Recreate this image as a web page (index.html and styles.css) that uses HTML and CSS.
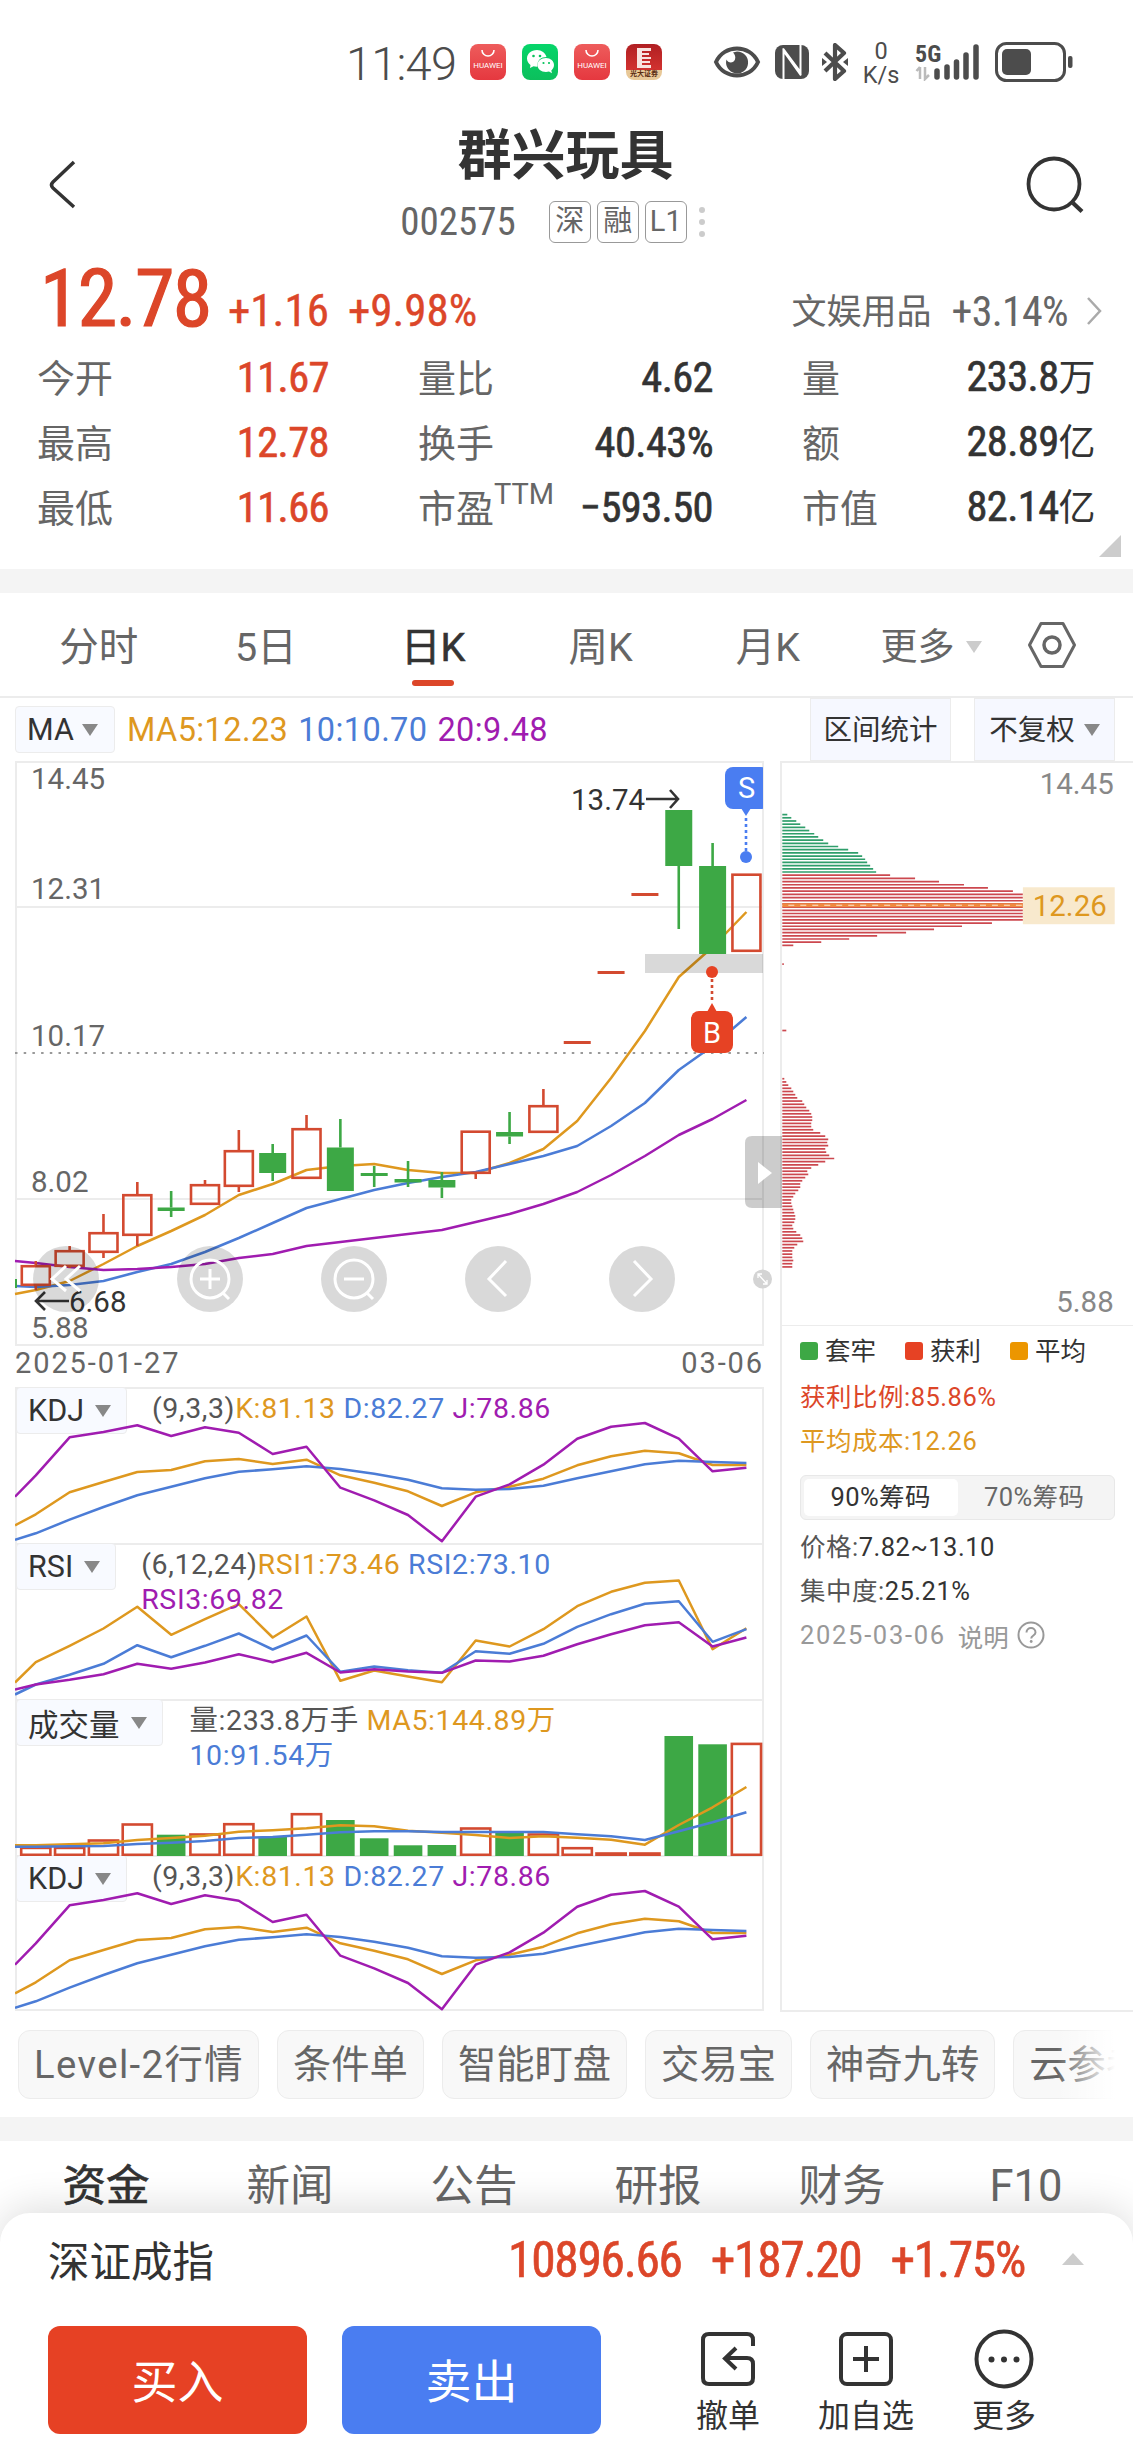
FILE: index.html
```html
<!DOCTYPE html>
<html lang="zh-CN">

<head>
    <meta charset="UTF-8" />
    <meta name="viewport" content="width=device-width, initial-scale=1.0" />
    <title>群兴玩具 002575</title>
    <link rel="stylesheet" href="styles.css">
</head>

<body>
    <div class="status-bar">
        <span class="time">11:49</span>
        <div class="app-icons">
            <div class="app huawei">
                <svg width="16" height="9" viewBox="0 0 16 9"><path d="M2 1a6 6 0 0 0 12 0" fill="none" stroke="#fff" stroke-width="1.6" /></svg>
                <span>HUAWEI</span>
            </div>
            <div class="app wechat">
                <svg width="28" height="26" viewBox="0 0 28 26">
                    <path d="M11 1C5 1 1 5 1 9.500c0 3 1.500 5 3.500 6.500L4 19l3.500-1.800c1 .3 2.500.5 4 .4C11 11 15 8 20.500 8 19.500 4 15.500 1 11 1z" fill="#fff" />
                    <path d="M20 9c-5 0-8.500 3-8.500 7s3.500 7 8.500 7c1 0 2-.2 3-.5l3 1.700-.7-2.800c1.700-1.300 2.700-3.200 2.700-5.400 0-4-3.500-7-8-7z" fill="#fff" />
                    <g fill="#07c35c"><circle cx="7.500" cy="7" r="1.300" /><circle cx="14" cy="7" r="1.300" /><circle cx="17.500" cy="14" r="1.100" /><circle cx="23" cy="14" r="1.100" /></g>
                </svg>
            </div>
            <div class="app huawei">
                <svg width="16" height="9" viewBox="0 0 16 9"><path d="M2 1a6 6 0 0 0 12 0" fill="none" stroke="#fff" stroke-width="1.6" /></svg>
                <span>HUAWEI</span>
            </div>
            <div class="app broker">
                <svg width="16" height="21" viewBox="0 0 16 21"><path d="M1 0h14v3H6v2h7v2H6v2h9v2H6v2h8v2H6v2h9v3H1z" fill="#f8e3e0" /></svg>
                <span>光大证券</span>
            </div>
        </div>
        <div class="status-icons">
            <svg width="48" height="34" viewBox="0 0 48 34">
                <path d="M3 17C11 -1 37 -1 45 17C37 35 11 35 3 17z" fill="none" stroke="#4c4c4c" stroke-width="4" />
                <path d="M24 6.500a11 11 0 1 1-10.500 8c1.500 4 7 4 8.500 0 1-3-.5-5.500-2-7z" fill="#4c4c4c" />
            </svg>
            <svg class="nfc" width="34" height="34" viewBox="0 0 34 34">
                <rect x="0" y="0" width="34" height="34" rx="8" fill="#4c4c4c" />
                <path d="M8.500 34V6L26 30.500M25.500 0v27L8 3.500" fill="none" stroke="#fff" stroke-width="2" />
            </svg>
            <svg class="bt" width="26" height="38" viewBox="0 0 26 38">
                <path d="M3 10l19 18-9 8V2l9 8L3 28" fill="none" stroke="#4c4c4c" stroke-width="4.200" stroke-linejoin="round" />
                <path d="M0 15l5 4-5 4zM26 15l-5 4 5 4z" fill="#4c4c4c" />
            </svg>
            <div class="speed"><span>0</span><span>K/s</span></div>
            <div class="signal">
                <span>5G</span>
                <svg width="66" height="38" viewBox="0 0 66 38">
                    <path d="M5 24v12M1.500 28l3.500-4M10 24v12l4-4" fill="none" stroke="#bbb" stroke-width="2.500" />
                    <g stroke="#4c4c4c" stroke-width="5.500" stroke-linecap="round"><path d="M22 28v6M32 24v10M41.500 19v15M51 12v22M61 4v30" /></g>
                </svg>
            </div>
            <svg class="battery" width="78" height="40" viewBox="0 0 78 40">
                <rect x="1.500" y="1.500" width="68" height="37" rx="10" fill="none" stroke="#4c4c4c" stroke-width="3" />
                <rect x="7" y="7" width="29" height="26" rx="5" fill="#4c4c4c" />
                <rect x="73" y="14" width="4.500" height="12" rx="2" fill="#4c4c4c" />
            </svg>
        </div>
    </div>

    <header class="top">
        <svg class="back" width="28" height="50" viewBox="0 0 28 50"><path d="M26 2L5 22q-3 3 0 6L26 47" fill="none" stroke="#333" stroke-width="3.500" /></svg>
        <div class="title">
            <h1>群兴玩具</h1>
            <div class="code-row">
                <span class="code">002575</span>
                <span class="mark">深</span>
                <span class="mark">融</span>
                <span class="mark">L1</span>
                <span class="dots"><i></i><i></i><i></i></span>
            </div>
        </div>
        <svg class="search" width="60" height="60" viewBox="0 0 60 60"><circle cx="29" cy="29" r="25.500" fill="none" stroke="#333" stroke-width="3.800" /><path d="M48 48l9 8.500" stroke="#333" stroke-width="4.200" /></svg>
    </header>

    <section class="quote">
        <div class="price-row">
            <span class="price">12.78</span>
            <span class="change">+1.16</span>
            <span class="change percent">+9.98%</span>
            <span class="sector">文娱用品</span>
            <span class="sector-change">+3.14%</span>
            <svg width="16" height="30" viewBox="0 0 16 30"><path d="M2 2l12 13L2 28" fill="none" stroke="#aaa" stroke-width="2.500" /></svg>
        </div>
        <div class="stats">
            <div><label>今开</label><b class="red">11.67</b></div>
            <div><label>量比</label><b>4.62</b></div>
            <div><label>量</label><b>233.8<em>万</em></b></div>
            <div><label>最高</label><b class="red">12.78</b></div>
            <div><label>换手</label><b>40.43%</b></div>
            <div><label>额</label><b>28.89<em>亿</em></b></div>
            <div><label>最低</label><b class="red">11.66</b></div>
            <div><label>市盈<sup>TTM</sup></label><b>−593.50</b></div>
            <div><label>市值</label><b>82.14<em>亿</em></b></div>
        </div>
        <i class="corner"></i>
    </section>

    <nav class="period">
        <span>分时</span>
        <span>5日</span>
        <span class="active">日K</span>
        <span>周K</span>
        <span>月K</span>
        <span class="more">更多<i class="down light"></i></span>
        <svg width="50" height="48" viewBox="0 0 50 48"><path d="M14 2.500h22L47.500 24 36 45.500H14L2.500 24z" fill="none" stroke="#666" stroke-width="3" stroke-linejoin="round" /><circle cx="25" cy="24" r="8" fill="none" stroke="#666" stroke-width="3.500" /></svg>
    </nav>

    <div class="ma-row">
        <span class="pick">MA<i class="down"></i></span>
        <span class="values"><span class="c1">MA5:12.23</span> <span class="c2">10:10.70</span> <span class="c3">20:9.48</span></span>
        <span class="tool">区间统计</span>
        <span class="tool">不复权<i class="down"></i></span>
    </div>

    <main class="charts">
        <div class="left">
            <svg id="kline" width="749" height="585" viewBox="0 0 749 585"></svg>
            <div class="dates"><span>2025-01-27</span><span>03-06</span></div>
            <div class="panel">
                <svg class="lines" data-chart="kdj" width="748" height="155"></svg>
                <span class="pick">KDJ<i class="down"></i></span>
                <p class="kdj"><span>(9,3,3)</span><span class="c1">K:81.13</span> <span class="c2">D:82.27</span> <span class="c3">J:78.86</span></p>
            </div>
            <div class="panel">
                <svg class="lines" data-chart="rsi" width="748" height="155"></svg>
                <span class="pick">RSI<i class="down"></i></span>
                <p class="rsi"><span>(6,12,24)</span><span class="c1">RSI1:73.46</span> <span class="c2">RSI2:73.10</span><br><span class="c3">RSI3:69.82</span></p>
            </div>
            <div class="panel">
                <svg class="lines" data-chart="vol" width="748" height="156"></svg>
                <span class="pick">成交量<i class="down"></i></span>
                <p class="vol"><span>量:233.8万手</span> <span class="c1">MA5:144.89万</span><br><span class="c2">10:91.54万</span></p>
            </div>
            <div class="panel">
                <svg class="lines" data-chart="kdj" width="748" height="155"></svg>
                <span class="pick">KDJ<i class="down"></i></span>
                <p class="kdj"><span>(9,3,3)</span><span class="c1">K:81.13</span> <span class="c2">D:82.27</span> <span class="c3">J:78.86</span></p>
            </div>
        </div>

        <div class="right">
            <svg id="chips" width="351" height="563" viewBox="0 0 351 563"></svg>
            <div class="chip-info">
                <div class="legend"><span class="lg">套牢</span><span class="lr">获利</span><span class="lo">平均</span></div>
                <p class="red">获利比例:85.86%</p>
                <p class="c1">平均成本:12.26</p>
                <div class="segment"><span class="on">90%筹码</span><span>70%筹码</span></div>
                <p><span>价格:</span>7.82~13.10</p>
                <p><span>集中度:</span>25.21%</p>
                <div class="note"><span class="day">2025-03-06</span><span>说明</span>
                    <svg width="28" height="28" viewBox="0 0 28 28"><circle cx="14" cy="14" r="12.500" fill="none" stroke="#999" stroke-width="2" /><path d="M9.500 11.500c0-6 9-6 9 0 0 3-4.300 3-4.300 6" fill="none" stroke="#999" stroke-width="2" /><circle cx="14.200" cy="20.500" r="1.400" fill="#999" /></svg>
                </div>
            </div>
        </div>
    </main>

    <div class="shortcuts">
        <span class="latin">Level-2行情</span>
        <span>条件单</span>
        <span>智能盯盘</span>
        <span>交易宝</span>
        <span>神奇九转</span>
        <span>云参考</span>
    </div>

    <nav class="info-tabs">
        <span class="active">资金</span>
        <span>新闻</span>
        <span>公告</span>
        <span>研报</span>
        <span>财务</span>
        <span>F10</span>
    </nav>

    <footer class="sheet">
        <div class="index-row">
            <span class="name">深证成指</span>
            <span class="num">10896.66</span>
            <span class="num">+187.20</span>
            <span class="num">+1.75%</span>
            <i class="up"></i>
        </div>
        <div class="actions">
            <button class="buy">买入</button>
            <button class="sell">卖出</button>
            <div class="act">
                <svg width="60" height="60" viewBox="0 0 60 60"><path d="M55 17V11q0-6-6-6H11q-6 0-6 6v38q0 6 6 6h38q6 0 6-6V35q0-6-6-6H27M38 19L27 29.500 38 40" fill="none" stroke="#333" stroke-width="4" /></svg>
                <span>撤单</span>
            </div>
            <div class="act">
                <svg width="60" height="60" viewBox="0 0 60 60"><rect x="5" y="5" width="50" height="50" rx="6" fill="none" stroke="#333" stroke-width="4" /><path d="M30 17v26M17 30h26" stroke="#333" stroke-width="4" /></svg>
                <span>加自选</span>
            </div>
            <div class="act">
                <svg width="60" height="60" viewBox="0 0 60 60"><circle cx="30" cy="30" r="27.500" fill="none" stroke="#333" stroke-width="4" /><g fill="#333"><circle cx="17.500" cy="30.500" r="3" /><circle cx="30" cy="30.500" r="3" /><circle cx="42.500" cy="30.500" r="3" /></g></svg>
                <span>更多</span>
            </div>
        </div>
    </footer>

    <script src="script.js"></script>
</body>

</html>
```
FILE: styles.css
```css
:root {
    --red: #dc4629;
    --green: #3da845;
    --orange: #de981f;
    --blue: #4b7cd6;
    --purple: #a01cb0;
    --text: #333;
    --gray: #666;
    --line: #ececec;
    --num: "Roboto Condensed", Roboto, "Noto Sans CJK SC", sans-serif;
}

* {
    box-sizing: border-box;
}

body {
    margin: 0;
    width: 1133px;
    height: 2453px;
    overflow: hidden;
    background: #fff;
    color: var(--text);
    font-family: Roboto, "Noto Sans CJK SC", sans-serif;
    white-space: nowrap;
}

svg {
    display: block;
    flex: none;
}

h1,
p {
    margin: 0;
}

i,
em {
    font-style: normal;
}

.red {
    color: var(--red);
}

.c1 {
    color: var(--orange);
}

.c2 {
    color: var(--blue);
}

.c3 {
    color: var(--purple);
}

.down {
    display: inline-block;
    border: 8.5px solid transparent;
    border-top: 12px solid #888;
    border-bottom: 0;
}

.down.light {
    border-top-color: #ccc;
}

/* status bar */
.status-bar {
    display: flex;
    align-items: center;
    height: 126px;
    padding-left: 346px;
    color: #4c4c4c;
}

.time {
    width: 124px;
    font-size: 47px;
    letter-spacing: -.8px;
    font-weight: 350;
}

.app-icons {
    display: flex;
    gap: 16px;
}

.app {
    display: flex;
    flex-direction: column;
    align-items: center;
    width: 36px;
    height: 36px;
    border-radius: 8px;
    overflow: hidden;
}

.huawei {
    padding-top: 5px;
    background: linear-gradient(#ee5c5c, #e5383f);
}

.huawei span {
    margin-top: 2px;
    color: #fff;
    font-size: 8px;
    line-height: 12px;
}

.wechat {
    justify-content: center;
    background: linear-gradient(#06d56a, #0cbf5c);
}

.broker {
    padding-top: 4px;
    background: linear-gradient(#b01f22, #d23230 72%, #e8c898 73%);
}

.broker span {
    font-size: 7px;
    line-height: 10px;
    font-weight: bold;
    color: #5a2a10;
}

.status-icons {
    display: flex;
    align-items: center;
    margin-left: 51px;
}

.nfc {
    margin-left: 14px;
}

.bt {
    margin-left: 13px;
}

.speed {
    display: flex;
    flex-direction: column;
    align-items: center;
    width: 40px;
    margin-left: 13px;
    font-size: 23.5px;
    line-height: 24px;
}

.signal {
    position: relative;
    margin-left: 14px;
}

.signal span {
    position: absolute;
    left: 0;
    top: -2px;
    font: bold 24px/24px var(--num);
}

.battery {
    margin-left: 14px;
}

.status-bar .status-icons svg,
.app-icons {
    position: relative;
    top: -1px;
}

/* header */
.top {
    display: flex;
    align-items: center;
    justify-content: space-between;
    height: 130px;
    padding: 0 48px 12px;
}

.title {
    display: flex;
    flex-direction: column;
    align-items: center;
    padding-left: 30px;
}

h1 {
    font-size: 54px;
    line-height: 60px;
    font-weight: bold;
}

.code-row {
    display: flex;
    align-items: center;
    margin: 14px 0 0 -26px;
    color: var(--gray);
}

.code {
    font: 39px/42px var(--num);
    margin-right: 33px;
}

.mark {
    width: 42px;
    height: 42px;
    margin-right: 6px;
    border: 1.5px solid #999;
    border-radius: 6px;
    text-align: center;
    font-size: 29px;
    line-height: 38px;
}

.dots {
    display: flex;
    flex-direction: column;
    gap: 6px;
    margin-left: 6px;
}

.dots i {
    width: 6px;
    height: 6px;
    border-radius: 3px;
    background: #ccc;
}

/* quote */
.quote {
    position: relative;
    height: 313px;
}

.price-row {
    display: flex;
    align-items: baseline;
    height: 90px;
    padding: 0 31px 0 40px;
    color: var(--red);
    font-family: var(--num);
}

.price {
    width: 188px;
    font-size: 80px;
    line-height: 86px;
    letter-spacing: -1.7px;
    -webkit-text-stroke: 1.2px;
}

.change {
    font-size: 45px;
    margin-right: 19px;
    -webkit-text-stroke: .4px;
}

.sector {
    margin-left: auto;
    font-size: 35px;
    color: var(--gray);
    position: relative;
    top: -2px;
}

.sector-change {
    margin: 0 18px 0 20px;
    font-size: 42px;
    letter-spacing: -.7px;
    color: var(--gray);
}

.stats {
    display: grid;
    grid-template-columns: 292px 295px 293px;
    column-gap: 89px;
    grid-auto-rows: 64.7px;
    padding-left: 37px;
}

.stats div {
    display: flex;
    align-items: center;
    justify-content: space-between;
}

.stats label {
    position: relative;
    margin-top: -5px;
    font-size: 38px;
    color: var(--gray);
}

.stats sup {
    position: absolute;
    left: 100%;
    top: 1px;
    font-size: 29px;
    line-height: 30px;
}

.stats b {
    font: 400 42.5px/60px var(--num);
    letter-spacing: -.6px;
    -webkit-text-stroke: .6px;
}

.stats em {
    font-size: 37px;
    -webkit-text-stroke: 0;
}

.corner {
    position: absolute;
    right: 12px;
    bottom: 12px;
    border-left: 22px solid transparent;
    border-bottom: 22px solid #ccc;
}

/* period tabs */
.period {
    display: flex;
    align-items: center;
    height: 129px;
    border-top: 24px solid #f4f4f4;
    border-bottom: 2px solid var(--line);
    font-size: 39.5px;
    color: var(--gray);
}

.period > span {
    position: relative;
    top: -1px;
    width: 167.3px;
    text-align: center;
}

.period > span:first-child {
    margin-left: 15px;
}

.period .active {
    color: var(--text);
    -webkit-text-stroke: .6px;
}

.period .active::after {
    content: "";
    position: absolute;
    left: 62px;
    bottom: -14px;
    width: 42px;
    height: 6px;
    border-radius: 3px;
    background: var(--red);
}

.period .more {
    width: 102px;
    margin: 0 45px 0 29px;
    font-size: 37px;
    text-align: left;
}

.more .down {
    margin-left: 12px;
    vertical-align: 7px;
}

/* chart heads */
.ma-row {
    display: flex;
    height: 63px;
    padding-left: 15px;
}

.pick {
    display: flex;
    align-items: center;
    height: 47px;
    padding: 0 14px 0 11px;
    border: 1.5px solid var(--line);
    border-radius: 4px;
    background: #f8faff;
    font-size: 30.5px;
}

.pick .down {
    margin-left: 11px;
}

.ma-row .pick {
    margin-top: 8px;
    width: 100px;
}

.ma-row .pick .down {
    margin-left: 8px;
}

.ma-row .values {
    flex: 1;
    padding-left: 12px;
    font-size: 32.5px;
    line-height: 65px;
    letter-spacing: .4px;
    word-spacing: 1.5px;
}

.tool {
    width: 141px;
    margin-right: 23px;
    border: 1px solid var(--line);
    background: #f6f8ff;
    text-align: center;
    font-size: 28.5px;
    line-height: 63px;
}

.tool:last-child {
    margin-right: 18px;
}

.tool .down {
    margin-left: 9px;
    vertical-align: 4px;
}

/* charts */
.charts {
    display: flex;
    justify-content: space-between;
    height: 1251px;
    padding-left: 15px;
}

.left {
    width: 749px;
}

#kline {
    overflow: visible;
    position: relative;
    z-index: 3;
}

.dates {
    display: flex;
    justify-content: space-between;
    height: 41px;
    font-size: 29px;
    letter-spacing: 1.9px;
    line-height: 35px;
    color: var(--gray);
}

.panel {
    position: relative;
    display: flex;
    align-items: flex-start;
    height: 156px;
    border: 2px solid var(--line);
    border-bottom: 0;
}

.panel:last-child {
    border-bottom: 2px solid var(--line);
}

.lines {
    position: absolute;
    left: -2px;
    top: -1px;
    z-index: 1;
}

.panel .pick {
    margin: -2px 0 0 -1px;
    padding-right: 15px;
}

.panel p {
    position: relative;
    z-index: 2;
    font-size: 28.5px;
    line-height: 35px;
    padding-top: 2px;
    letter-spacing: .6px;
    color: #555;
}

.kdj,
.rsi {
    margin-left: 25px;
}

.rsi {
    letter-spacing: .7px;
}

.vol {
    margin-left: 27px;
}

.right {
    width: 353px;
    border: solid var(--line);
    border-width: 2px 0 2px 2px;
}

#chips {
    border-bottom: 1.5px solid var(--line);
}

.chip-info {
    padding: 9px 18px 0 18px;
    font-size: 25.5px;
}

.legend {
    display: flex;
    height: 38px;
    line-height: 32px;
}

.legend span {
    display: flex;
    align-items: center;
    height: 32px;
    width: 105px;
}

.legend span::before {
    content: "";
    width: 18px;
    height: 18px;
    margin-right: 7px;
    border-radius: 3px;
    background: var(--green);
}

.legend .lr::before {
    background: #e64224;
}

.legend .lo::before {
    background: #ec9600;
}

.chip-info p {
    height: 44px;
    line-height: 48px;
    letter-spacing: .5px;
}

.chip-info p span {
    color: #555;
}

.segment {
    display: flex;
    height: 45px;
    margin: 14px 0 3px;
    padding: 3px;
    border: 1px solid #e8e8e8;
    border-radius: 6px;
    background: #f4f4f4;
    font-size: 25.5px;
    letter-spacing: .4px;
    line-height: 36px;
    text-align: center;
    color: var(--gray);
}

.segment span {
    flex: 1;
    border-radius: 5px;
}

.segment .on {
    background: #fff;
    color: var(--text);
}

.note {
    display: flex;
    align-items: center;
    height: 44px;
    margin-top: 2px;
    gap: 8px;
    color: #999;
}

.note .day {
    margin-right: 4px;
    letter-spacing: 1.7px;
}

/* shortcuts */
.shortcuts {
    position: relative;
    display: flex;
    gap: 18px;
    height: 105px;
    padding: 18px 0 0 18px;
    margin-right: 18px;
    overflow: hidden;
    font-size: 38.3px;
    color: var(--gray);
}

.shortcuts::after {
    content: "";
    position: absolute;
    right: 0;
    top: 0;
    width: 58px;
    height: 100%;
    background: linear-gradient(90deg, rgba(255, 255, 255, 0), #fff);
}

.shortcuts span {
    flex: none;
    height: 69px;
    padding: 0 15px;
    border: 1.5px solid var(--line);
    border-radius: 12px;
    background: #f8f8f8;
    line-height: 67px;
}

.shortcuts .latin {
    width: 241px;
    letter-spacing: 1.4px;
}

/* info tabs */
.info-tabs {
    display: grid;
    grid-template-columns: repeat(6, 184px);
    height: 96px;
    padding-left: 14px;
    border-top: 24px solid #f4f4f4;
    font-size: 43.5px;
    line-height: 91px;
    text-align: center;
    color: var(--gray);
}

.info-tabs .active {
    color: var(--text);
    -webkit-text-stroke: .7px;
}

/* bottom sheet */
.sheet {
    position: relative;
    height: 241px;
    border-radius: 30px 30px 0 0;
    background: #fff;
    box-shadow: 0 -4px 40px rgba(0, 0, 0, .14);
}

.index-row {
    display: flex;
    align-items: center;
    height: 93px;
    padding: 0 49px 0 48px;
}

.index-row .name {
    flex: 1;
    margin-top: -2px;
    font-size: 41.5px;
}

.index-row .num {
    margin-left: 29px;
    font: 400 49.5px/60px var(--num);
    letter-spacing: -1.3px;
    color: var(--red);
    -webkit-text-stroke: .6px;
}

.up {
    margin: 0 0 2px 37px;
    border: 11px solid transparent;
    border-top: 0;
    border-bottom: 12px solid #ccc;
}

.actions {
    display: flex;
    padding: 20px 0 0 48px;
}

.actions button {
    width: 259px;
    height: 108px;
    margin-right: 35px;
    padding: 0 0 5px;
    border: none;
    border-radius: 12px;
    color: #fff;
    font: 46px "Noto Sans CJK SC", sans-serif;
}

.buy {
    background: #e64124;
}

.sell {
    background: #4a7df1;
}

.act {
    display: flex;
    flex-direction: column;
    align-items: center;
    width: 138px;
    padding-top: 3px;
    font-size: 32px;
    line-height: 54px;
}

.sell + .act {
    margin-left: 23px;
}
```
FILE: script.js
```js
const RED = '#d34a30', GREEN = '#3da845', ORANGE = '#de981f', BLUE = '#4b7cd6', PURPLE = '#a01cb0';

// first point of each line sits on the left edge, the others on the candles
const cx = i => 20.8 + 33.84 * i;
const line = (data, color) => {
    const pts = data.map((y, i) => (i ? cx(i - 1).toFixed(1) : 0) + ',' + y).join(' ');
    return `<polyline points="${pts}" fill="none" stroke="${color}" stroke-width="2.5" stroke-linejoin="round" />`;
};

// [color, top, bottom, high, low]
const candles = [
    ['r', 503, 524, 499, 528], ['r', 488, 505, 484, 506], ['r', 470, 491, 452, 496], ['r', 432, 474, 420, 484],
    ['g', 445.5, 449, 429, 455], ['r', 422, 443, 418, 443], ['r', 388, 425, 368, 430], ['g', 391, 411, 382, 419],
    ['r', 366, 417, 353, 417], ['g', 385.5, 429, 357, 429], ['g', 411, 414, 404, 425], ['g', 417, 420.5, 399, 425],
    ['g', 418, 425.5, 410, 436], ['r', 368.5, 412, 368.5, 417], ['g', 370, 374.5, 350, 382], ['r', 343, 371, 327, 371],
    ['r', 279, 282, 279, 282], ['r', 209, 212, 209, 212], ['r', 131, 134, 131, 134], ['g', 48, 104, 48, 167],
    ['g', 104, 192, 81, 192], ['r', 111.5, 190, 111.5, 190]
];

const ma5 = [532, 528, 519, 502, 484, 469, 453, 433, 422, 408, 404, 402, 408, 411, 411, 401, 387, 359, 316, 269, 215, 185, 150];
const ma10 = [524, 525, 523, 519, 510, 502, 490, 476, 461, 446, 437, 428, 421, 415, 410, 402, 394, 384, 364, 341, 308, 284, 255];
const ma20 = [499, 501, 505, 508, 507, 505, 502, 496, 492, 484, 480, 476, 472, 468, 460, 452, 442, 430, 413, 394, 373, 357, 338];

function drawKline() {
    let s = `<defs><clipPath id="box"><rect width="748" height="584" /></clipPath></defs>
        <rect x="1" y="1" width="747" height="583" fill="none" stroke="#ececec" stroke-width="2" />
        <g transform="translate(0 1)">
        <path d="M0 145h749M0 437h749" stroke="#ececec" stroke-width="2" />
        <path d="M0 291h749" stroke="#999" stroke-width="2.200" stroke-dasharray="2.500 6.200" />`;
    [['14.45', 27], ['12.31', 137], ['10.17', 284], ['8.02', 430], ['5.88', 576]].forEach(([t, y]) => {
        s += `<text x="16" y="${y}" font-size="29.500" fill="#666">${t}</text>`;
    });
    s += line(ma5, ORANGE) + line(ma10, BLUE) + line(ma20, PURPLE);
    s += `<path d="M1 517v9" stroke="${GREEN}" stroke-width="2" />`;
    candles.forEach(([c, top, bottom, high, low], i) => {
        const x = cx(i), color = c === 'r' ? RED : GREEN;
        s += `<path d="M${x} ${high}V${top}M${x} ${bottom}V${low}" stroke="${color}" stroke-width="2.600" />`;
        if (c === 'g' || bottom - top < 4) {
            s += `<rect x="${x - 13.5}" y="${top}" width="27" height="${bottom - top}" fill="${color}" />`;
        } else {
            s += `<rect x="${x - 14}" y="${top + 1.2}" width="28" height="${bottom - top - 2.4}" fill="none" stroke="${color}" stroke-width="2.600" />`;
        }
    });
    s += `<rect x="630" y="192" width="118" height="19" fill="rgba(0,0,0,.15)" />`;

    // high / low marks
    s += `<g font-size="29.500" fill="#333"><text x="556" y="48">13.74</text><text x="54" y="550">6.68</text></g>
        <path d="M631 37h32M655 28l8 9-8 9M54 539H22M30 530l-9 9 9 9" fill="none" stroke="#333" stroke-width="2.600" />`;

    // sell and buy points
    s += `<g clip-path="url(#box)"><rect x="710" y="5" width="44" height="42" rx="8" fill="#4a7df1" /></g>
        <path d="M726 46h10l-5 8z" fill="#4a7df1" />
        <path d="M731 56v34" stroke="#4a7df1" stroke-width="2.600" stroke-dasharray="3 3" />
        <circle cx="731" cy="95" r="6" fill="#4a7df1" />
        <text x="731.500" y="36" text-anchor="middle" font-size="29" fill="#fff">S</text>
        <circle cx="697" cy="210" r="6" fill="#e64224" />
        <path d="M697 217v24" stroke="#d34a30" stroke-width="2.600" stroke-dasharray="3 3" />
        <path d="M692 250h10l-5-9z" fill="#e64224" />
        <rect x="676" y="249" width="42" height="42" rx="8" fill="#e64224" />
        <text x="697" y="281" text-anchor="middle" font-size="29" fill="#fff">B</text>`;

    // floating controls
    const icons = [
        'M0 -13L-14 0L0 12M14 -13L0 0L14 12',
        'M-19 0a19 19 0 1 0 38 0a19 19 0 1 0 -38 0M-10 0h20M0 -10v20M13 14l6 6',
        'M-19 0a19 19 0 1 0 38 0a19 19 0 1 0 -38 0M-10 0h20M13 14l6 6',
        'M8 -18L-9 0L8 17',
        'M-8 -18L9 0L-8 17'
    ];
    icons.forEach((d, i) => {
        s += `<g transform="translate(${51 + 144 * i} 517)"><circle r="33" fill="rgba(0,0,0,.15)" /><path d="${d}" fill="none" stroke="#fff" stroke-width="3" /></g>`;
    });
    s += `<path d="M767 374h-30q-7 0-7 7v58q0 7 7 7h30z" fill="rgba(0,0,0,.2)" /><path d="M743 400v22l14-11z" fill="#fff" />
        <circle cx="747.500" cy="517" r="9.500" fill="#d4d4d4" /><path d="M743 516v-4h4M743 512l9 10M752 518v4h-4" fill="none" stroke="#fff" stroke-width="1.300" /></g>`;
    document.getElementById('kline').innerHTML = s;
}

const kdj = {
    j: [108.7, 87.3, 49.3, 44, 37.3, 48, 39.3, 44.7, 66, 58.7, 99.7, 112.3, 127, 153.3, 108.7, 96.3, 76.7, 50.7, 38.7, 35, 50.7, 83.3, 79.7],
    k: [137.3, 126.3, 104.3, 94, 84, 82, 73.3, 71, 76, 71.7, 87.3, 94.7, 103.3, 118, 104.3, 98.7, 90.7, 77.3, 68.3, 62.7, 65.3, 77, 77],
    d: [151.7, 145.3, 131.7, 119, 107.3, 98.7, 90.3, 83.7, 81.3, 78.3, 81, 85.7, 91.7, 100.3, 101.7, 101, 97.7, 90.3, 83.3, 76.3, 72.7, 74, 75]
};

const rsi = {
    r1: [138.5, 118.2, 101.8, 84.5, 62.8, 90.8, 75.2, 60.2, 93.5, 72.5, 136.8, 126.5, 132.5, 138.2, 96.5, 102.5, 85.2, 62.2, 47.8, 38.8, 36.5, 105.2, 84.2],
    r2: [150.5, 140.5, 130.8, 119.8, 101.2, 113.2, 101.8, 89.5, 105.5, 91.5, 127.8, 122.5, 126.2, 128.8, 107.2, 109.8, 99.8, 82.8, 70.2, 59.8, 57.2, 97.8, 85.2],
    r3: [145.5, 140.5, 135.8, 130.2, 119.8, 124.8, 118.5, 110.2, 118.2, 108.8, 128.5, 125.2, 127.5, 128.8, 116.5, 117.5, 111.8, 100.2, 90.2, 81.2, 78.2, 102.5, 93.5]
};

const vol = {
    tops: [146.7, 146.7, 139.3, 123.3, 134.7, 133.3, 123, 136.7, 113, 120, 138.3, 145.3, 145, 127.3, 132.3, 133.3, 147, 152.3, 152.3, 36, 44.3, 42.7],
    ma5: [145.3, 145.3, 144.3, 143.3, 140, 138, 135.7, 131.7, 130.3, 128.3, 125.3, 126.3, 130.7, 132.7, 135, 138, 136.3, 137.7, 139.7, 144.7, 125, 107.3, 87],
    ma10: [146.7, 146.7, 146.3, 146, 144, 142.7, 141, 138, 137, 134.7, 132.3, 131.3, 131.3, 132, 132, 132, 132, 134.3, 136.3, 140, 131.3, 122.3, 112.3]
};

function volBars() {
    return vol.tops.map((y, i) => {
        const x = cx(i);
        if (candles[i][0] === 'g') return `<rect x="${x - 14.3}" y="${y}" width="28.600" height="${156 - y}" fill="${GREEN}" />`;
        return `<rect x="${x - 14.6}" y="${y + 1.2}" width="29.200" height="${Math.max(153.6 - y, 1)}" fill="none" stroke="${RED}" stroke-width="2.600" />`;
    }).join('');
}

const charts = {
    kdj: () => line(kdj.k, ORANGE) + line(kdj.d, BLUE) + line(kdj.j, PURPLE),
    rsi: () => line(rsi.r1, ORANGE) + line(rsi.r2, BLUE) + line(rsi.r3, PURPLE),
    vol: () => volBars() + line(vol.ma5, ORANGE) + line(vol.ma10, BLUE)
};

function drawChips() {
    const lost = [5, 9, 14, 18, 23, 27, 32, 36, 41, 46, 56, 66, 76, 80, 83, 85, 88, 91, 94];
    const won = [108, 133, 157, 182, 206, 231, 241, 241, 241, 241, 241, 241, 241, 241, 241, 210, 180, 152, 124, 95, 67, 39, 11];
    const low = [2, 4, 6, 9, 11, 13, 15, 20, 22, 24, 27, 29, 30, 30, 29, 29, 31, 38, 43, 46, 45, 46, 43, 44, 47, 52, 43, 36, 29, 25, 26, 23, 20, 18, 18, 16, 13, 11, 9, 9, 10, 11, 12, 13, 13, 12, 10, 11, 14, 18, 20, 21, 15, 12, 10, 10, 10, 11, 10, 10];
    const step = 3.195;
    const rows = (data, y0, color) => data.map((w, i) => `<path d="M0 ${(y0 + i * step).toFixed(2)}h${w}" stroke="${color}" stroke-width="1.700" />`).join('');
    document.getElementById('chips').innerHTML =
        rows(lost, 51.7, '#2f9e6b') +
        rows(won, 51.7 + 19 * step, '#cc484f') +
        rows([1.5], 201.5, '#cc484f') + rows([4], 268, '#cc484f') +
        rows(low, 316.3, '#cc484f') +
        `<path d="M0 142.500h241" stroke="#ef8a40" stroke-width="4" />
        <path d="M6 142.500h235" stroke="#fbe3cf" stroke-width="1.200" stroke-dasharray="6 6" />
        <rect x="241" y="124.500" width="92" height="37" fill="#f8e9cd" />
        <text x="325" y="153" text-anchor="end" font-size="29.500" fill="${ORANGE}">12.26</text>
        <g font-size="29.500" fill="#888" text-anchor="end"><text x="332" y="31">14.45</text><text x="332" y="550">5.88</text></g>`;
}

drawKline();
drawChips();
document.querySelectorAll('.lines').forEach(el => {
    el.innerHTML = charts[el.dataset.chart]();
});
```
